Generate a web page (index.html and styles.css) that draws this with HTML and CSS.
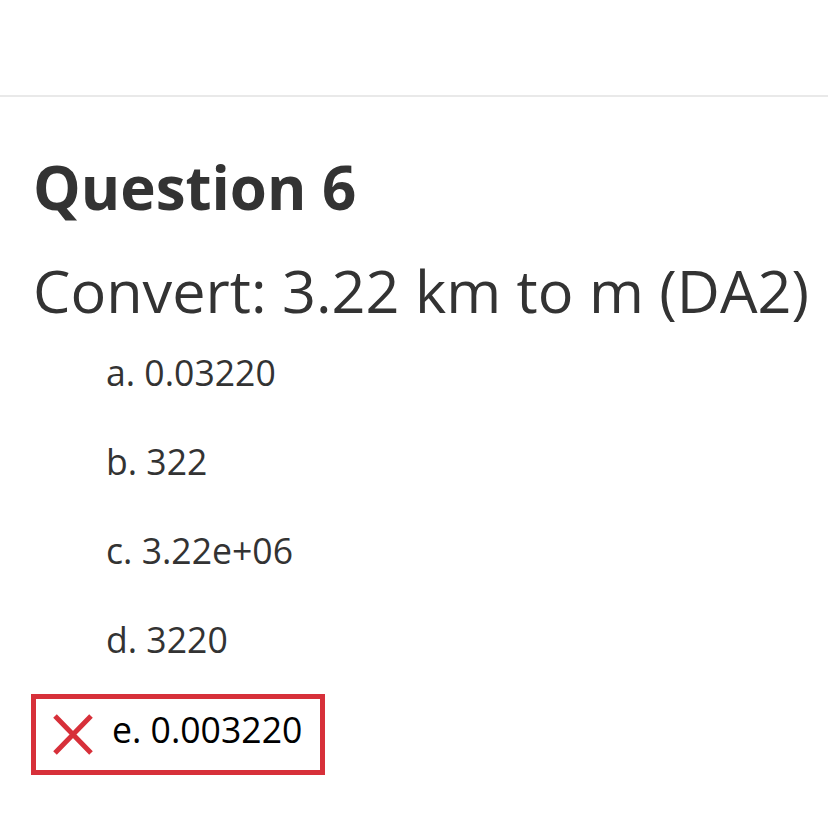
FILE: index.html
```html
<!DOCTYPE html>
<html>
<head>
<meta charset="utf-8">
<link rel="stylesheet" href="styles.css">
</head>
<body>
<div class="topbar"></div>
<main class="content">
  <h1 class="qtitle">Question 6</h1>
  <p class="qtext">Convert: 3.22 km to m (DA2)</p>
  <ul class="answers">
    <li class="answer">a. 0.03220</li>
    <li class="answer">b. 322</li>
    <li class="answer">c. 3.22e+06</li>
    <li class="answer">d. 3220</li>
    <li class="answer wrong">
      <svg class="xicon" viewBox="0 0 40 41" width="40" height="41"><path d="M2 2 L38 39 M38 2 L2 39" stroke="#d7303a" stroke-width="5" fill="none"/></svg>
      <span class="wrong-text">e. 0.003220</span>
    </li>
  </ul>
</main>
</body>
</html>
```
FILE: styles.css
```css
html, body { margin: 0; padding: 0; background: #fff; }
body { font-family: "Open Sans", sans-serif; color: #333; }
.topbar { height: 95px; border-bottom: 2px solid #e9e9e9; }
.content { padding: 0 0 0 33px; }
.qtitle { margin: 54px 0 0; font-size: 60px; font-weight: 700; line-height: 72px; }
.qtext { margin: 30px 0 0; font-size: 59.4px; font-weight: 400; line-height: 75px; white-space: nowrap; }
.answers { list-style: none; margin: 0; padding: 0; }
.answer { font-size: 35.6px; line-height: 89px; padding-left: 73px; height: 89px; }
.wrong { display: inline-flex; align-items: center; gap: 19px; border: 5px solid #d7303a; margin: 10px 0 0 -2px; padding: 0 18px 0 17px; height: 71px; color: #000; }
.xicon { display: block; }
.wrong-text { line-height: 61px; padding-bottom: 10px; }
```
